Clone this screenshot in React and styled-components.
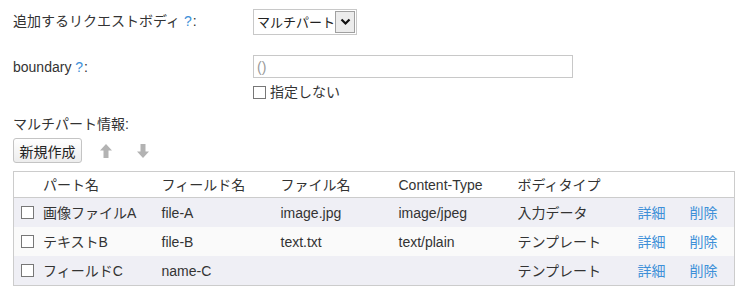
import React, { useState } from "react";
import styled, { createGlobalStyle } from "styled-components";

const parts = [
    { name: "画像ファイルA", field: "file-A", file: "image.jpg", type: "image/jpeg", body: "入力データ" },
    { name: "テキストB", field: "file-B", file: "text.txt", type: "text/plain", body: "テンプレート" },
    { name: "フィールドC", field: "name-C", file: "", type: "", body: "テンプレート" },
];

function App() {
    const [bodyType, setBodyType] = useState("multipart");
    return (
        <Page>
            <GlobalStyle />
            <FormRow>
                <Label>
                    追加するリクエストボディ <Help>?</Help>:
                </Label>
                <SelectBox>
                    <Select value={bodyType} onChange={(e) => setBodyType(e.target.value)}>
                        <option value="multipart">マルチパート</option>
                        <option value="text">テキスト</option>
                    </Select>
                    <SelectArrow>
                        <svg width="11" height="8" viewBox="0 0 11 8">
                            <polyline points="1.5,1.5 5.5,5.5 9.5,1.5" fill="none" stroke="#111" strokeWidth="2.2" />
                        </svg>
                    </SelectArrow>
                </SelectBox>
            </FormRow>
            <FormRow $top={20}>
                <Label>
                    boundary <Help>?</Help>:
                </Label>
                <Field>
                    <TextInput defaultValue="()" />
                    <CheckLabel>
                        <Check type="checkbox" />
                        指定しない
                    </CheckLabel>
                </Field>
            </FormRow>
            <SectionTitle>マルチパート情報:</SectionTitle>
            <Toolbar>
                <Button>新規作成</Button>
                <MoveIcon>
                    <svg width="12" height="14" viewBox="0 0 12 14">
                        <polygon points="6,0 12,6.5 8.5,6.5 8.5,14 3.5,14 3.5,6.5 0,6.5" fill="#b3b3b3" />
                    </svg>
                </MoveIcon>
                <MoveIcon>
                    <svg width="12" height="14" viewBox="0 0 12 14">
                        <polygon points="6,14 12,7.5 8.5,7.5 8.5,0 3.5,0 3.5,7.5 0,7.5" fill="#b3b3b3" />
                    </svg>
                </MoveIcon>
            </Toolbar>
            <Table>
                <thead>
                    <tr>
                        <Th $w={141} $pl={29}>パート名</Th>
                        <Th $w={119}>フィールド名</Th>
                        <Th $w={118}>ファイル名</Th>
                        <Th $w={119}>Content-Type</Th>
                        <Th $w={120}>ボディタイプ</Th>
                        <Th $w={52}></Th>
                        <Th $w={52}></Th>
                    </tr>
                </thead>
                <tbody>
                    {parts.map((p) => (
                        <Row key={p.name}>
                            <Td $pl={7}>
                                <NameCell>
                                    <Check type="checkbox" />
                                    {p.name}
                                </NameCell>
                            </Td>
                            <Td>{p.field}</Td>
                            <Td>{p.file}</Td>
                            <Td>{p.type}</Td>
                            <Td>{p.body}</Td>
                            <Td><Link href="#">詳細</Link></Td>
                            <Td><Link href="#">削除</Link></Td>
                        </Row>
                    ))}
                </tbody>
            </Table>
        </Page>
    );
}

const GlobalStyle = createGlobalStyle`
    body {
        margin: 0;
        background: #fff;
        color: #333;
        font-family: "Liberation Sans", "Noto Sans CJK JP", sans-serif;
        font-size: 14px;
        line-height: 18px;
    }
`;

const Page = styled.div`
    padding: 9px 13px;
    width: 722px;
`;

const FormRow = styled.div`
    display: flex;
    align-items: flex-start;
    margin-top: ${(props) => props.$top || 0}px;
`;

const Label = styled.div`
    width: 240px;
    height: 24px;
    display: flex;
    align-items: center;
    white-space: pre;
`;

const Help = styled.span`
    color: #3d8fd8;
    margin-right: 1px;
`;

const SelectBox = styled.div`
    display: flex;
    align-items: center;
    height: 26px;
    box-sizing: border-box;
    border: 1px solid #c8c8c8;
    background: #fff;
    padding: 0 1px 0 0;
`;

const Select = styled.select`
    appearance: none;
    border: none;
    outline: none;
    background: transparent;
    font-family: inherit;
    font-size: 13px;
    color: #222;
    padding: 0 0 0 3px;
    width: 81px;
    height: 24px;
`;

const SelectArrow = styled.span`
    display: flex;
    align-items: center;
    justify-content: center;
    width: 18px;
    height: 20px;
    border: 1px solid #a0a0a0;
    background: #ececec;
    pointer-events: none;
`;

const Field = styled.div`
    display: flex;
    flex-direction: column;
`;

const TextInput = styled.input`
    width: 320px;
    height: 23px;
    box-sizing: border-box;
    border: 1px solid #c8c8c8;
    padding: 0 3px;
    font-family: inherit;
    font-size: 14px;
    color: #999;
    outline: none;
`;

const CheckLabel = styled.label`
    display: flex;
    align-items: center;
    gap: 4px;
    height: 20px;
    margin-top: 4px;
`;

const Check = styled.input`
    appearance: none;
    margin: 0;
    width: 13px;
    height: 13px;
    border: 1px solid #777;
    background: #fff;
    box-sizing: border-box;
    flex: none;
`;

const SectionTitle = styled.div`
    margin-top: 12px;
    line-height: 20px;
`;

const Toolbar = styled.div`
    display: flex;
    align-items: center;
    margin-top: 4px;
`;

const Button = styled.button`
    height: 25px;
    width: 69px;
    border: 1px solid #c4c4c4;
    border-radius: 3px;
    background: linear-gradient(#fff, #ededed);
    font-family: inherit;
    font-size: 14px;
    color: #222;
    padding: 0;
    margin-right: 18px;
`;

const MoveIcon = styled.span`
    display: flex;
    width: 12px;
    margin-right: 25px;
`;

const Table = styled.table`
    margin-top: 8px;
    width: 722px;
    border-collapse: collapse;
    border: 1px solid #ccc;
    table-layout: fixed;
`;

const Th = styled.th`
    width: ${(props) => props.$w}px;
    box-sizing: border-box;
    text-align: left;
    font-weight: normal;
    height: 26px;
    padding: 0 0 0 ${(props) => props.$pl || 7}px;
    border-bottom: 1px solid #ccc;
    background: #fff;
    white-space: nowrap;
`;

const Row = styled.tr`
    background: #fafafa;
    &:nth-child(odd) {
        background: #efeff5;
    }
`;

const Td = styled.td`
    height: 29px;
    padding: 0 0 0 ${(props) => props.$pl || 7}px;
    white-space: nowrap;
`;

const NameCell = styled.span`
    display: flex;
    align-items: center;
    gap: 9px;
`;

const Link = styled.a`
    color: #3d8fd8;
    text-decoration: none;
`;

export default App;
